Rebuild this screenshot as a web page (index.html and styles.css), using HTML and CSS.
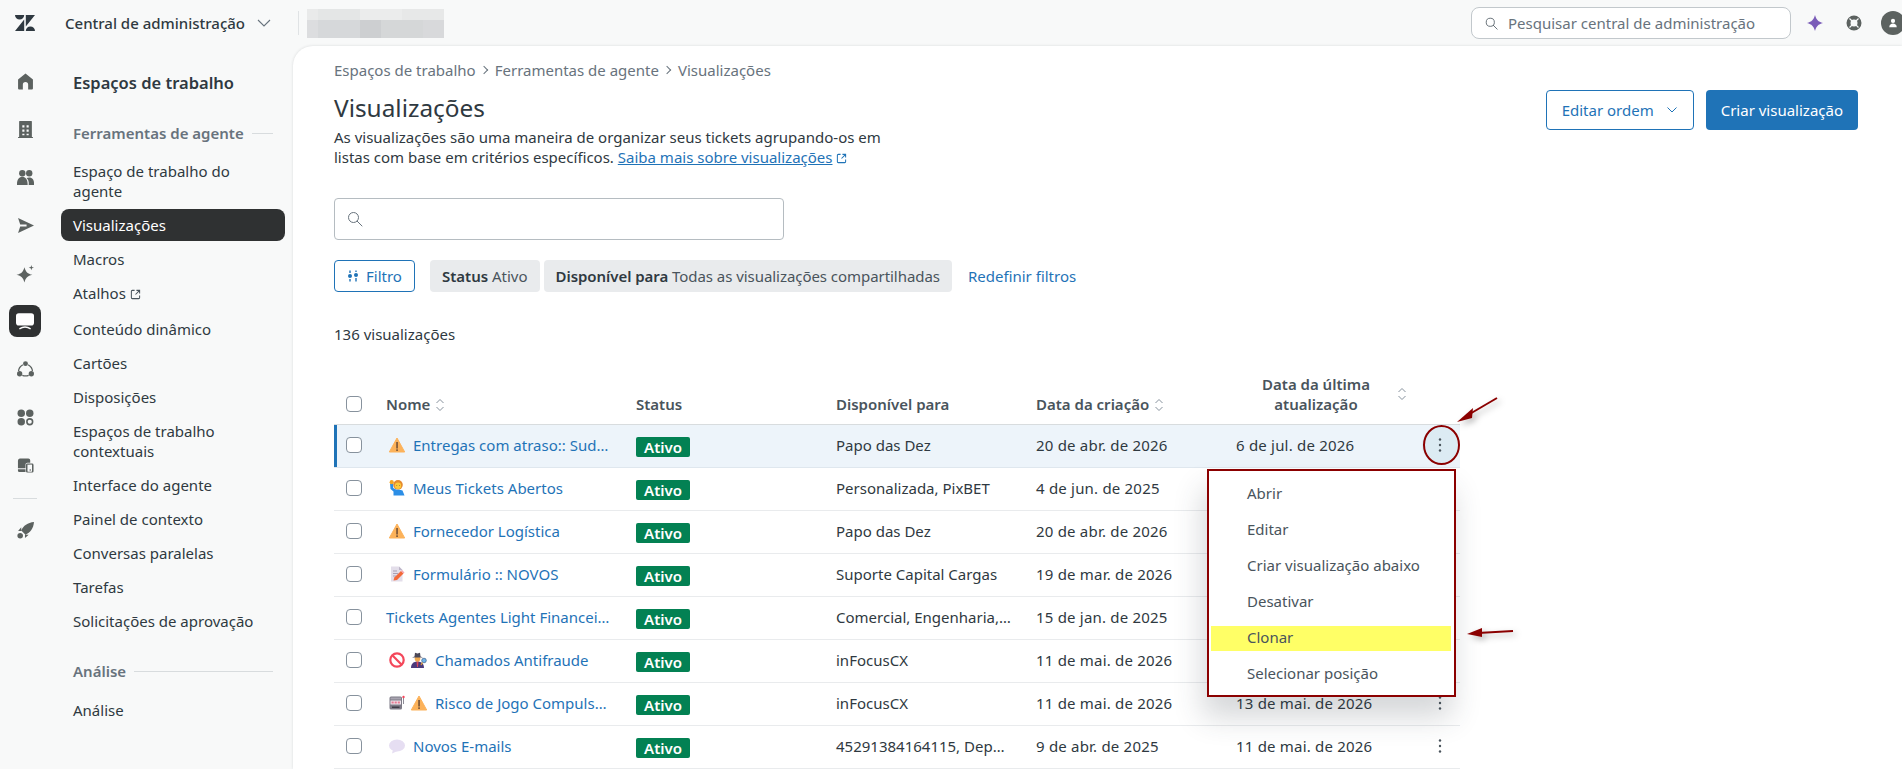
FILE: index.html
```html
<!DOCTYPE html>
<html>
<head>
    <meta charset="UTF-8">
    <title>Visualizações</title>
    <link rel="stylesheet" href="styles.css">
</head>
<body>
    <svg class="sprite">
        <symbol id="warn" viewBox="0 0 16 16"><path d="M8 1 15.700 15H.3z" fill="#fcb25a" stroke="#fcb25a" stroke-linejoin="round"/><rect x="7.300" y="5" width="1.500" height="6.500" fill="#6b4a33"/><rect x="7.300" y="12.300" width="1.500" height="1.700" fill="#6b4a33"/></symbol>
        <symbol id="raise" viewBox="0 0 16 16"><path d="M1 3.500h3.200V8L7 9.500h3l3.500 1 2 5H4.500v-4L1.500 9z" fill="#2c8ee6"/><circle cx="2.700" cy="2.200" r="2.100" fill="#f5a623"/><circle cx="9" cy="4.800" r="4.800" fill="#e58a2e"/><ellipse cx="9" cy="5.800" rx="3.200" ry="3.300" fill="#fcc93a"/><path d="M7.500 5.500h.6M10 5.500h.6" stroke="#6b4a33" stroke-width=".8"/></symbol>
        <symbol id="memo" viewBox="0 0 16 16"><path d="M2 .5h8l3.500 3.500v11.500H2z" fill="#e3deea"/><path d="M10 .5V4h3.500z" fill="#bdb5c8"/><path d="M4 5h4M4 7.500h5M4 10h3" stroke="#a9a0b5"/><path d="M4.500 14.500l.8-3L12 5l2.500 2.500-6.500 6.500z" fill="#f3693a"/><path d="M12 5l1-1 2.500 2.500-1 1z" fill="#f4a6b0"/></symbol>
        <symbol id="ban" viewBox="0 0 16 16"><circle cx="8" cy="8" r="6.700" fill="none" stroke="#f4475a" stroke-width="2.200"/><path d="M3.300 3.300l9.400 9.400" stroke="#f4475a" stroke-width="2.200"/></symbol>
        <symbol id="spy" viewBox="0 0 16 16"><path d="M0 16c0-4.500 3-6.500 6.500-6.500s6.500 2 6.500 6.500z" fill="#4b3a7b"/><path d="M5.500 9.500h2L7 15h-1z" fill="#d8465a"/><circle cx="6.500" cy="6.800" r="2.800" fill="#f0a94e"/><path d="M1 5.500 3.500 4.500 4 .8 6.500 1.500 9 .8 9.500 4.500 12 5.500z" fill="#4c4858"/><circle cx="13" cy="8.500" r="2.300" fill="#6fb4e8" stroke="#3f5f8a" stroke-width=".7"/><path d="M11.500 10.500 10 13" stroke="#e0a030" stroke-width="1.200"/></symbol>
        <symbol id="slot" viewBox="0 0 16 16"><rect x=".5" y="1.500" width="12.500" height="13" rx="1.500" fill="#7d7a86"/><rect x="1.500" y="2.500" width="10.500" height="2" fill="#a8a4b0"/><rect x="1.500" y="5.500" width="10.500" height="4" fill="#efe6ee"/><path d="M2.500 6.500h2.200v2H2.500zM5.600 6.500h2.200v2H5.600zM8.700 6.500h2.200v2H8.700z" fill="#e67a92"/><rect x="3" y="11.500" width="7.500" height="1.500" fill="#3f3c47"/><path d="M14.500 9V3" stroke="#8f8c98"/><circle cx="14.500" cy="2" r="1.200" fill="#f4475a"/></symbol>
        <symbol id="balloon" viewBox="0 0 16 16"><ellipse cx="8" cy="7.500" rx="8" ry="6" fill="#e6def2"/><path d="M4 11.500 3 15.500 8.500 13z" fill="#e6def2"/></symbol>
        <symbol id="sort" viewBox="0 0 12 16"><path d="M2.500 6 6 2.500 9.500 6M2.500 10 6 13.500 9.500 10" fill="none" stroke="#87929d" stroke-linejoin="round"/></symbol>
        <symbol id="kebab" viewBox="0 0 16 16"><circle cx="8" cy="2.500" r="1.200"/><circle cx="8" cy="8" r="1.200"/><circle cx="8" cy="13.500" r="1.200"/></symbol>
        <symbol id="ext" viewBox="0 0 12 12"><path d="M5 1.500H2.500a1 1 0 0 0-1 1v7a1 1 0 0 0 1 1h7a1 1 0 0 0 1-1V7M7 1.500h3.500V5M10.500 1.500 6 6" fill="none" stroke="currentColor" stroke-width="1.100"/></symbol>
        <symbol id="search" viewBox="0 0 16 16"><circle cx="6.500" cy="6.500" r="5" fill="none" stroke="currentColor"/><path d="M10.200 10.200 15 15" stroke="currentColor" stroke-linecap="round"/></symbol>
    </svg>

    <header class="topbar">
        <svg class="logo" viewBox="0 0 20 16"><path d="M9.200 4.500V16H0zM9.200 0A4.600 4.600 0 0 1 0 0zM10.800 16a4.600 4.600 0 0 1 9.200 0zM10.800 11.500V0H20z" fill="#2f3941"/></svg>
        <span class="product">Central de administração</span>
        <svg class="product-arrow" viewBox="0 0 14 8"><path d="M1 1l6 6 6-6" fill="none" stroke="#68737d" stroke-width="1.100"/></svg>
        <span class="top-sep"></span>
        <div class="blurred"></div>
        <div class="top-search">
            <svg class="top-search-icon"><use href="#search"/></svg>
            <span>Pesquisar central de administração</span>
        </div>
        <svg class="top-icon spark" viewBox="0 0 16 16"><path d="M8 0C9.500 5 11 6.500 16 8 11 9.500 9.500 11 8 16 6.500 11 5 9.500 0 8 5 6.500 6.500 5 8 0z" fill="#7a5cb8"/></svg>
        <svg class="top-icon help" viewBox="0 0 16 16"><circle cx="8" cy="8" r="5.500" fill="none" stroke="#5c6260" stroke-width="4"/><path d="M3.500 3.500l3 3M12.500 3.500l-3 3M3.500 12.500l3-3M12.500 12.500l-3-3" stroke="#f8f9f9" stroke-width="1.200"/></svg>
        <div class="avatar"><svg viewBox="0 0 12 12"><circle cx="6" cy="3.500" r="2.500" fill="#fff"/><path d="M1.500 11c0-6 9-6 9 0z" fill="#fff"/></svg></div>
    </header>

    <div class="layout">
        <nav class="rail">
            <svg class="rail-icon" viewBox="0 0 16 16"><path d="M8 .5 15 6v8.500a1 1 0 0 1-1 1h-3.500V11a2.500 2.500 0 0 0-5 0v4.500H2a1 1 0 0 1-1-1V6z"/></svg>
            <svg class="rail-icon" viewBox="0 0 16 16"><path fill-rule="evenodd" d="M2.500 0h11a.5.5 0 0 1 .5.500V15h1v1H1v-1h1V.5a.5.5 0 0 1 .5-.5zM5 4v2h2V4zm4 0v2h2V4zM5 8v2h2V8zm4 0v2h2V8zM5 12v1.500h2V12zm4 0v1.500h2V12z"/></svg>
            <svg class="rail-icon" viewBox="0 0 16 16"><circle cx="5" cy="4" r="3"/><circle cx="11.500" cy="4" r="3"/><path d="M0 14c0-9 10-9 10 0v1H0zM11 15c.5-3-.5-5-2-6.500 3-1.500 7 0 7 4.500v2z"/></svg>
            <svg class="rail-icon" viewBox="0 0 16 16"><path d="M1 1 16 8 1 15l2-6h6V7H3z"/></svg>
            <svg class="rail-icon" viewBox="0 0 16 16"><path d="M7 2C8.400 6.600 9.700 8 14.500 9.200 9.700 10.400 8.400 11.800 7 16.500 5.600 11.800 4.300 10.400-.5 9.200 4.300 8 5.600 6.600 7 2zM13.500 0l.6 1.900 1.900.6-1.900.6-.6 1.900-.6-1.900-1.900-.6 1.900-.6z"/></svg>
            <div class="rail-active">
                <svg viewBox="0 0 16 16"><rect x="0" y="1" width="16" height="11" rx="2.500" fill="#fff"/><path d="M3 15c3-2 7-2 10 0" fill="none" stroke="#fff" stroke-width="1.200"/></svg>
            </div>
            <svg class="rail-icon" viewBox="0 0 16 16"><circle cx="8" cy="2.500" r="2.300"/><circle cx="2.500" cy="12" r="2.500"/><circle cx="13.500" cy="12" r="2.500"/><path d="M5.500 3.500C3 5 1.500 7 1.500 9.500M10.500 3.500c2.500 1.500 4 3.500 4 6M5 13.500c2 .8 4 .8 6 0" fill="none" stroke="#5c6260" stroke-width="1.200"/></svg>
            <svg class="rail-icon" viewBox="0 0 16 16"><circle cx="4" cy="4" r="3.500"/><circle cx="12" cy="4" r="3.500"/><circle cx="4" cy="12" r="3.500"/><circle cx="12" cy="12" r="2.700" fill="none" stroke="#5c6260" stroke-width="1.500"/></svg>
            <svg class="rail-icon" viewBox="0 0 18 16"><path d="M3 .5h9a2 2 0 0 1 2 2V5H11a2 2 0 0 0-2 2v4H1V3a2.500 2.500 0 0 1 2-2.500zM1 12h8v3H2.500A1.500 1.500 0 0 1 1 13.500z"/><path fill-rule="evenodd" d="M11 6h5a1.500 1.500 0 0 1 1.500 1.500V14a1.500 1.500 0 0 1-1.500 1.500h-5A1.500 1.500 0 0 1 9.500 14V7.500A1.500 1.500 0 0 1 11 6zm1 1.200a.5.5 0 0 0-.9.300v6.500a.5.5 0 0 0 .5.500h3.800a.5.5 0 0 0 .5-.5V7.500a.5.5 0 0 0-.5-.5z"/><circle cx="14" cy="12.800" r=".8"/></svg>
            <div class="rail-sep"></div>
            <svg class="rail-icon" viewBox="0 0 16 16"><path d="M16 0C10 .5 6 3.500 4 8l4 4c4.500-2 7.500-6 8-12zM4 5 1 8.500h3zM11 12l-3.500 3v-3z"/><circle cx="3" cy="13" r="2.600"/></svg>
        </nav>

        <aside class="sidebar">
            <h2 class="side-title">Espaços de trabalho</h2>
            <div class="side-group"><span>Ferramentas de agente</span><i></i></div>
            <a class="side-item">Espaço de trabalho do agente</a>
            <a class="side-item selected">Visualizações</a>
            <a class="side-item">Macros</a>
            <a class="side-item with-ext">Atalhos <svg class="ext-icon"><use href="#ext"/></svg></a>
            <a class="side-item">Conteúdo dinâmico</a>
            <a class="side-item">Cartões</a>
            <a class="side-item">Disposições</a>
            <a class="side-item">Espaços de trabalho contextuais</a>
            <a class="side-item">Interface do agente</a>
            <a class="side-item">Painel de contexto</a>
            <a class="side-item">Conversas paralelas</a>
            <a class="side-item">Tarefas</a>
            <a class="side-item">Solicitações de aprovação</a>
            <div class="side-group second"><span>Análise</span><i></i></div>
            <a class="side-item">Análise</a>
        </aside>

        <main class="main">
            <div class="crumbs">Espaços de trabalho <b></b> Ferramentas de agente <b></b> Visualizações</div>
            <div class="page-head">
                <div>
                    <h1>Visualizações</h1>
                    <p class="intro">As visualizações são uma maneira de organizar seus tickets agrupando-os em listas com base em critérios específicos. <a class="link">Saiba mais sobre visualizações</a> <svg class="ext-icon link-ext"><use href="#ext"/></svg></p>
                </div>
                <div class="actions">
                    <button class="btn outline">Editar ordem <svg viewBox="0 0 12 8"><path d="M1.500 1.500 6 6l4.500-4.500" fill="none" stroke="currentColor"/></svg></button>
                    <button class="btn primary">Criar visualização</button>
                </div>
            </div>

            <div class="search-box"><svg><use href="#search"/></svg></div>

            <div class="filters">
                <button class="btn outline small"><svg viewBox="0 0 12 12"><path d="M3 .5v2.500M3 9v2.500M9 .5v1.500M9 8v3.500" stroke="#1f73b7" stroke-width="1.400"/><circle cx="3" cy="6" r="2" fill="#1f73b7"/><circle cx="9" cy="5" r="2" fill="#1f73b7"/></svg> Filtro</button>
                <span class="chip first-chip"><b>Status</b> Ativo</span>
                <span class="chip long-chip"><b>Disponível para</b> Todas as visualizações compartilhadas</span>
                <a class="reset">Redefinir filtros</a>
            </div>

            <div class="count">136 visualizações</div>

            <table class="grid">
                <colgroup><col class="c-check"><col class="c-name"><col class="c-wide"><col class="c-wide"><col class="c-wide"><col class="c-upd"><col></colgroup>
                <thead>
                    <tr>
                        <th><span class="check"></span></th>
                        <th>Nome <svg class="sort"><use href="#sort"/></svg></th>
                        <th>Status</th>
                        <th>Disponível para</th>
                        <th>Data da criação <svg class="sort"><use href="#sort"/></svg></th>
                        <th><div class="th-last"><span>Data da última atualização</span><svg class="sort"><use href="#sort"/></svg></div></th>
                        <th></th>
                    </tr>
                </thead>
                <tbody>
                    <tr class="current">
                        <td><span class="check"></span></td>
                        <td><a class="name"><svg class="emoji"><use href="#warn"/></svg><span>Entregas com atraso:: Sud…</span></a></td>
                        <td><span class="badge">Ativo</span></td>
                        <td>Papo das Dez</td>
                        <td class="date">20 de abr. de 2026</td>
                        <td class="date">6 de jul. de 2026</td>
                        <td><span class="kebab open"><svg><use href="#kebab"/></svg></span></td>
                    </tr>
                    <tr>
                        <td><span class="check"></span></td>
                        <td><a class="name"><svg class="emoji"><use href="#raise"/></svg><span>Meus Tickets Abertos</span></a></td>
                        <td><span class="badge">Ativo</span></td>
                        <td>Personalizada, PixBET</td>
                        <td class="date">4 de jun. de 2025</td>
                        <td></td>
                        <td></td>
                    </tr>
                    <tr>
                        <td><span class="check"></span></td>
                        <td><a class="name"><svg class="emoji"><use href="#warn"/></svg><span>Fornecedor Logística</span></a></td>
                        <td><span class="badge">Ativo</span></td>
                        <td>Papo das Dez</td>
                        <td class="date">20 de abr. de 2026</td>
                        <td></td>
                        <td></td>
                    </tr>
                    <tr>
                        <td><span class="check"></span></td>
                        <td><a class="name"><svg class="emoji"><use href="#memo"/></svg><span>Formulário :: NOVOS</span></a></td>
                        <td><span class="badge">Ativo</span></td>
                        <td>Suporte Capital Cargas</td>
                        <td class="date">19 de mar. de 2026</td>
                        <td></td>
                        <td></td>
                    </tr>
                    <tr>
                        <td><span class="check"></span></td>
                        <td><a class="name plain"><span>Tickets Agentes Light Financei…</span></a></td>
                        <td><span class="badge">Ativo</span></td>
                        <td>Comercial, Engenharia,…</td>
                        <td class="date">15 de jan. de 2025</td>
                        <td></td>
                        <td></td>
                    </tr>
                    <tr>
                        <td><span class="check"></span></td>
                        <td><a class="name"><svg class="emoji"><use href="#ban"/></svg><svg class="emoji"><use href="#spy"/></svg><span>Chamados Antifraude</span></a></td>
                        <td><span class="badge">Ativo</span></td>
                        <td>inFocusCX</td>
                        <td class="date">11 de mai. de 2026</td>
                        <td></td>
                        <td></td>
                    </tr>
                    <tr>
                        <td><span class="check"></span></td>
                        <td><a class="name"><svg class="emoji"><use href="#slot"/></svg><svg class="emoji"><use href="#warn"/></svg><span>Risco de Jogo Compuls…</span></a></td>
                        <td><span class="badge">Ativo</span></td>
                        <td>inFocusCX</td>
                        <td class="date">11 de mai. de 2026</td>
                        <td class="date">13 de mai. de 2026</td>
                        <td><span class="kebab"><svg><use href="#kebab"/></svg></span></td>
                    </tr>
                    <tr>
                        <td><span class="check"></span></td>
                        <td><a class="name"><svg class="emoji"><use href="#balloon"/></svg><span>Novos E-mails</span></a></td>
                        <td><span class="badge">Ativo</span></td>
                        <td>45291384164115, Dep…</td>
                        <td class="date">9 de abr. de 2025</td>
                        <td class="date">11 de mai. de 2026</td>
                        <td><span class="kebab"><svg><use href="#kebab"/></svg></span></td>
                    </tr>
                </tbody>
            </table>
        </main>
    </div>

    <ul class="menu">
        <li>Abrir</li>
        <li>Editar</li>
        <li>Criar visualização abaixo</li>
        <li>Desativar</li>
        <li class="marked">Clonar</li>
        <li>Selecionar posição</li>
    </ul>

    <!-- marcacoes feitas em cima da captura -->
    <span class="ring"></span>
    <svg class="notes" viewBox="0 0 1902 769">
        <path d="M1497 398 1468 415" stroke="#8b0000" stroke-width="2"/>
        <path d="M1457 422 1473 408 1472 418z" fill="#8b0000"/>
        <path d="M1513 631 1478 633" stroke="#8b0000" stroke-width="2"/>
        <path d="M1467 634 1482 628 1482 637z" fill="#8b0000"/>
    </svg>
</body>
</html>
```

FILE: styles.css
```css
* {
    margin: 0;
    padding: 0;
    box-sizing: border-box;
}
html, body {
    height: 100%;
}
body {
    overflow: hidden;
    background: #f8f9f9;
    color: #2f3941;
    font-family: "Noto Sans", "Open Sans", sans-serif;
    font-size: 15px;
    line-height: 20px;
}
svg {
    display: block;
}
.sprite {
    display: none;
}

/* top bar */
.topbar {
    height: 46px;
    display: flex;
    align-items: center;
    padding-left: 15px;
}
.logo {
    width: 20px;
    height: 16px;
}
.product {
    margin-left: 30px;
    font-weight: 500;
    font-size: 15px;
    color: #2f3941;
}
.product-arrow {
    width: 14px;
    height: 8px;
    margin-left: 12px;
}
.top-sep {
    width: 1px;
    height: 24px;
    margin-left: 27px;
    background: #e0e3e5;
}
.blurred {
    width: 137px;
    height: 29px;
    margin-left: 8px;
    background:
        linear-gradient(90deg, #e9eaea 0 11px, #e4e6e6 11px 53px, #ebecec 53px 95px, #e7e8e8 95px 137px) 0 0 / 100% 11px no-repeat,
        linear-gradient(90deg, #dcdddf 0 11px, #d6d8da 11px 53px, #cdcfd1 53px 74px, #d5d7d8 74px 116px, #d8d9db 116px 137px) 0 11px / 100% 18px no-repeat;
}
.top-search {
    width: 320px;
    height: 32px;
    margin-left: auto;
    display: flex;
    align-items: center;
    gap: 10px;
    padding-left: 13px;
    background: #fff;
    border: 1px solid #c2c8cc;
    border-radius: 8px;
    color: #68737d;
}
.top-search-icon {
    width: 13px;
    height: 13px;
    color: #49545c;
}
.top-icon {
    width: 16px;
    height: 16px;
    flex: none;
}
.spark {
    margin-left: 16px;
}
.help {
    margin-left: 23px;
}
.avatar {
    width: 24px;
    height: 24px;
    flex: none;
    margin: 0 -3px 0 19px;
    border-radius: 50%;
    background: #5c6260;
    display: flex;
    align-items: center;
    justify-content: center;
}
.avatar svg {
    width: 10px;
    height: 10px;
}

/* page */
.layout {
    display: flex;
    height: 723px;
}
.rail {
    width: 50px;
    flex: none;
    display: flex;
    flex-direction: column;
    align-items: center;
    padding-top: 27px;
}
.rail-icon {
    width: 17px;
    height: 17px;
    margin-bottom: 31px;
    fill: #5c6260;
    overflow: visible;
}
.rail-active {
    width: 32px;
    height: 32px;
    margin: -8px 0 24px;
    background: #2f3132;
    border-radius: 8px;
    display: flex;
    align-items: center;
    justify-content: center;
}
.rail-active svg {
    width: 18px;
    height: 18px;
}
.rail-sep {
    width: 24px;
    height: 1px;
    margin: -7px 0 23px;
    background: #d8dcde;
}
.sidebar {
    width: 243px;
    flex: none;
    padding: 27px 8px 0 11px;
}
.side-title {
    font-size: 16.500px;
    font-weight: 600;
    line-height: 20px;
    padding-left: 12px;
    color: #2f3941;
}
.side-group {
    display: flex;
    align-items: center;
    gap: 8px;
    padding: 0 12px;
    margin: 30px 0 12px;
    font-weight: 600;
    color: #68737d;
}
.side-group.second {
    margin: 24px 0 13px;
}
.side-group i {
    flex: 1;
    height: 1px;
    background: #d8dcde;
}
.side-item {
    display: block;
    padding: 6px 12px;
    margin: 2px 0;
    border-radius: 8px;
    color: #2f3941;
}
.side-item.selected {
    background: #2f3132;
    color: #fff;
}
.side-item.with-ext {
    padding-bottom: 8px;
}
.ext-icon {
    display: inline-block;
    width: 11px;
    height: 11px;
    vertical-align: -1px;
    color: #49545c;
}

.main {
    flex: 1;
    min-width: 0;
    background: #fff;
    border-top-left-radius: 20px;
    box-shadow: 0 0 3px rgba(47, 57, 65, .16);
    padding: 14px 0 0 41px;
}
.crumbs {
    color: #68737d;
    display: flex;
    align-items: center;
    gap: 7.500px;
}
.crumbs b {
    width: 6px;
    height: 6px;
    margin-left: -2px;
    border-top: 1px solid #68737d;
    border-right: 1px solid #68737d;
    transform: rotate(45deg);
}
.page-head {
    display: flex;
    justify-content: space-between;
    padding-right: 44px;
}
h1 {
    margin-top: 13px;
    font-size: 24.400px;
    font-weight: 400;
    line-height: 30px;
}
.intro {
    width: 570px;
    margin-top: 4px;
}
.link, .reset {
    color: #1f73b7;
}
.link {
    text-decoration: underline;
}
.link-ext {
    color: #1f73b7;
}
.actions {
    display: flex;
    gap: 12px;
    margin-top: 10px;
}
.btn {
    height: 40px;
    padding: 0 15px;
    border-radius: 4px;
    font-family: inherit;
    font-size: 15px;
    background: #fff;
    display: flex;
    align-items: center;
}
.btn.outline {
    border: 1px solid #1f73b7;
    color: #1f73b7;
    gap: 12px;
}
.btn.outline svg {
    width: 12px;
    height: 8px;
}
.btn.primary {
    border: 0;
    background: #1f73b7;
    color: #fff;
}
.search-box {
    width: 450px;
    height: 42px;
    margin-top: 31px;
    border: 1px solid #b5bcc1;
    border-radius: 4px;
    display: flex;
    align-items: center;
    padding-left: 12px;
    color: #68737d;
}
.search-box svg {
    width: 16px;
    height: 16px;
}
.filters {
    display: flex;
    align-items: center;
    margin-top: 20px;
}
.btn.small {
    height: 32px;
    padding: 0 12px;
    gap: 7px;
}
.btn.outline.small svg {
    width: 12px;
    height: 12px;
}
.chip {
    height: 32px;
    padding: 0 12px;
    margin-left: 4px;
    background: #e9ebed;
    border-radius: 4px;
    line-height: 32px;
    color: #49545c;
}
.chip b {
    font-weight: 600;
    color: #2f3941;
}
.first-chip {
    margin-left: 15px;
}
.long-chip {
    letter-spacing: -.05px;
}
.reset {
    margin-left: 16px;
}
.count {
    margin-top: 32px;
}

/* table */
.grid {
    width: 1126px;
    margin-top: 27px;
    table-layout: fixed;
    border-collapse: collapse;
}
.c-check { width: 52px; }
.c-name { width: 250px; }
.c-wide { width: 200px; }
.c-upd { width: 184px; }
th {
    height: 53px;
    padding-bottom: 10px;
    text-align: left;
    font-weight: 600;
    color: #49545c;
    border-bottom: 1px solid #d8dcde;
    vertical-align: bottom;
}
th .check {
    margin-bottom: 2px;
}
td {
    height: 43px;
    padding-bottom: 2px;
    border-bottom: 1px solid #e9ebed;
    vertical-align: middle;
}
.date {
    letter-spacing: .2px;
}
.sort {
    display: inline-block;
    width: 12px;
    height: 16px;
    vertical-align: -3px;
}
.th-last {
    display: flex;
    align-items: center;
}
.th-last span {
    width: 160px;
    text-align: center;
}
.check {
    display: block;
    width: 16px;
    height: 16px;
    margin-left: 12px;
    background: #fff;
    border: 1px solid #87929d;
    border-radius: 4px;
}
.current td {
    background: #edf4fa;
    border-bottom-color: #dfe7ee;
}
.current td:first-child {
    box-shadow: inset 3px 0 0 #1f73b7;
}
.name {
    display: flex;
    align-items: center;
    gap: 6px;
    padding-left: 3px;
    color: #1f73b7;
    white-space: nowrap;
}
.name span {
    margin-left: 2px;
}
.name.plain {
    padding-left: 0;
}
.name.plain span {
    margin-left: 0;
}
.emoji {
    width: 16px;
    height: 16px;
    flex: none;
}
.badge {
    display: inline-block;
    width: 54px;
    height: 20px;
    margin-top: 5px;
    background: #038153;
    border-radius: 2px;
    color: #fff;
    font-weight: 600;
    text-align: center;
    line-height: 21px;
}
.kebab {
    display: block;
    width: 36px;
    height: 36px;
    margin-left: 2px;
    padding: 10px;
    fill: #49545c;
}
.kebab svg {
    width: 16px;
    height: 16px;
}
.kebab.open {
    background: #dcebf3;
    border-radius: 50%;
}

/* overlays */
.menu {
    position: absolute;
    left: 1207px;
    top: 469px;
    width: 249px;
    height: 228px;
    list-style: none;
    padding: 4px 3px 4px 2px;
    background: #fff;
    border: 2px solid #8b0000;
    box-shadow: -4px 20px 28px rgba(47, 57, 65, .2);
    color: #49545c;
}
.menu li {
    height: 36px;
    line-height: 36px;
    padding-left: 36px;
}
.menu .marked {
    background: linear-gradient(#ffff66, #ffff66) 0 7px / 100% 25px no-repeat;
}
.ring {
    position: absolute;
    left: 1423px;
    top: 425px;
    width: 37px;
    height: 40px;
    border: 2px solid #8b0000;
    border-radius: 50%;
}
.notes {
    position: absolute;
    left: 0;
    top: 0;
    width: 1902px;
    height: 769px;
    filter: drop-shadow(3px 3px 3px rgba(0, 0, 0, .3));
    pointer-events: none;
}
```
